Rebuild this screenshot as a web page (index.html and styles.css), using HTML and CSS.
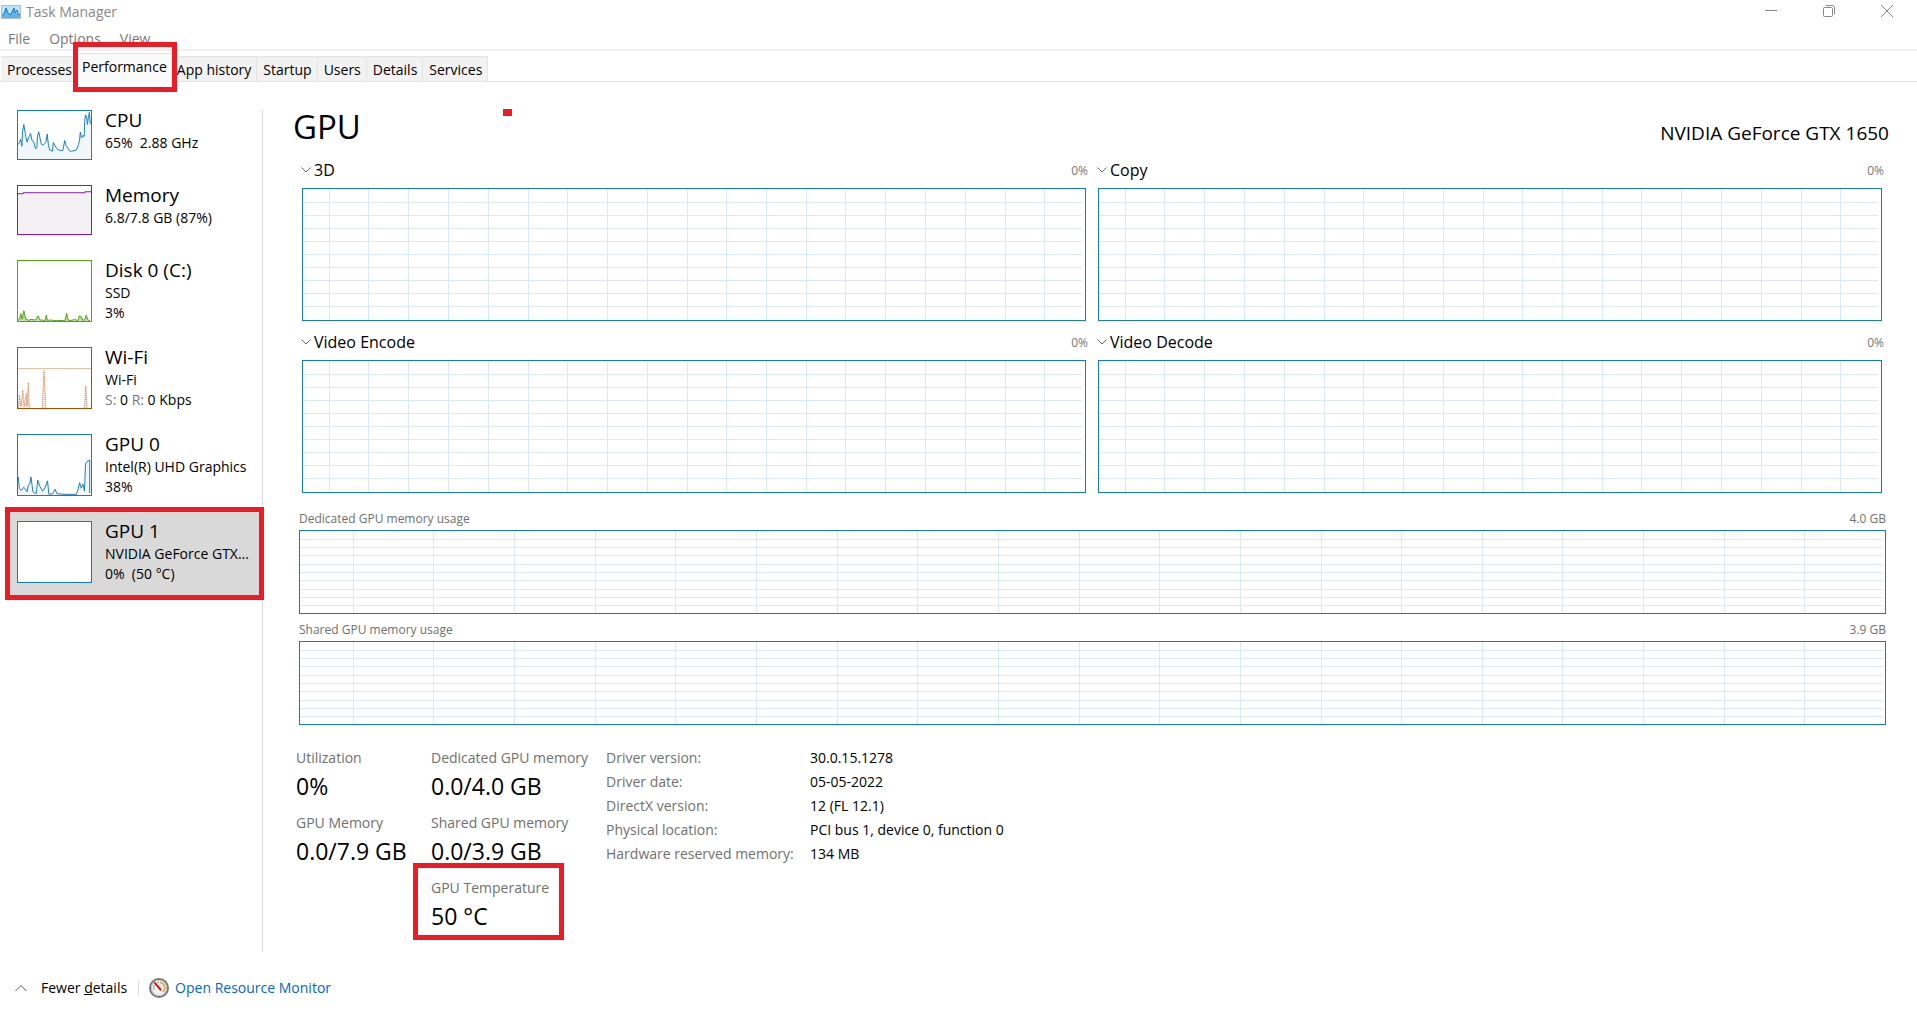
FILE: index.html
```html
<!DOCTYPE html>
<html lang="en">
<head>
    <meta charset="UTF-8">
    <meta name="viewport" content="width=device-width, initial-scale=1.0">
    <title>Task Manager</title>
    <link rel="stylesheet" href="styles.css">
</head>
<body>
    <!-- Shared drawings -->
    <svg class="defs" aria-hidden="true">
        <symbol id="grid-engine" viewBox="0 0 783 132" preserveAspectRatio="none">
            <path d="M0 13.5H780M0 26.5H780M0 39.5H780M0 52.5H780M0 65.5H780M0 79.5H780M0 92.5H780M0 105.5H780M0 118.5H780M26.5 0V132M65.5 0V132M105.5 0V132M145.5 0V132M185.5 0V132M225.5 0V132M264.5 0V132M304.5 0V132M344.5 0V132M384.5 0V132M424.5 0V132M464.5 0V132M504.5 0V132M543.5 0V132M583.5 0V132M623.5 0V132M663.5 0V132M703.5 0V132M742.5 0V132"/>
        </symbol>
        <symbol id="grid-memory" viewBox="0 0 1585 82" preserveAspectRatio="none">
            <path d="M0 8.5H1583M0 16.5H1583M0 24.5H1583M0 33.5H1583M0 41.5H1583M0 49.5H1583M0 58.5H1583M0 66.5H1583M0 74.5H1583M53.5 0V82M133.5 0V82M214.5 0V82M295.5 0V82M375.5 0V82M456.5 0V82M537.5 0V82M617.5 0V82M698.5 0V82M779.5 0V82M859.5 0V82M940.5 0V82M1021.5 0V82M1101.5 0V82M1182.5 0V82M1262.5 0V82M1343.5 0V82M1424.5 0V82M1504.5 0V82"/>
        </symbol>
        <symbol id="chevron" viewBox="0 0 10 6">
            <path d="M.5.5 5 5 9.5.5" fill="none" stroke="#666"/>
        </symbol>
    </svg>

    <header class="title-bar">
        <svg class="app-icon" viewBox="0 0 20 14" aria-hidden="true">
            <rect x=".5" y=".5" width="19" height="13" fill="#b9e2fb" stroke="#b5bcc2"/>
            <path d="M1 10 3 9 5 3 7 8 9 10 11 7 13 3 14 8 16 8 19 10V13H1z" fill="#5fb4ee"/>
            <path d="M1 10 3 9 5 3 7 8 9 10 11 7 13 3 14 8 16 5 17 9 19 10" fill="none" stroke="#1777b8"/>
        </svg>
        <span class="app-name">Task Manager</span>
        <div class="window-buttons">
            <button type="button" aria-label="Minimize">
                <svg width="12" height="12" viewBox="0 0 12 12"><path d="M0 5.5H12"/></svg>
            </button>
            <button type="button" aria-label="Restore">
                <svg width="12" height="12" viewBox="0 0 12 12"><rect x=".5" y="2.500" width="9" height="9" rx="1"/><path d="M3 .5H9.500Q11.500.5 11.500 2.500V9"/></svg>
            </button>
            <button type="button" aria-label="Close">
                <svg width="12" height="12" viewBox="0 0 12 12"><path d="M0 0 12 12M12 0 0 12"/></svg>
            </button>
        </div>
    </header>

    <nav class="menu-bar">
        <button type="button">File</button>
        <button type="button">Options</button>
        <button type="button">View</button>
    </nav>

    <div class="tabs" role="tablist">
        <button type="button" role="tab">Processes</button>
        <button type="button" role="tab" class="active marked" aria-selected="true">Performance</button>
        <button type="button" role="tab">App history</button>
        <button type="button" role="tab">Startup</button>
        <button type="button" role="tab">Users</button>
        <button type="button" role="tab">Details</button>
        <button type="button" role="tab">Services</button>
    </div>

    <div class="content">
        <aside class="sidebar">
            <button type="button" class="device">
                <svg class="thumb cpu" viewBox="0 0 225 150" preserveAspectRatio="none">
                    <path class="area" d="M0 150V105L5 98 8 88 12 110 14 65 18 42 24 80 28 97 33 82 39 70 43 92 48 95 54 118 58 115 60 78 64 65 68 85 72 104 78 106 86 98 90 72 94 108 98 122 104 124 106 126 109 98 114 108 120 118 126 122 138 124 141 108 144 92 148 108 154 116 158 124 164 126 180 122 187 104 190 88 192 66 196 84 200 76 204 80 206 30 208 12 212 20 214 42 217 20 220 4 223 40V150z"/>
                    <path d="M0 105 5 98 8 88 12 110 14 65 18 42 24 80 28 97 33 82 39 70 43 92 48 95 54 118 58 115 60 78 64 65 68 85 72 104 78 106 86 98 90 72 94 108 98 122 104 124 106 126 109 98 114 108 120 118 126 122 138 124 141 108 144 92 148 108 154 116 158 124 164 126 180 122 187 104 190 88 192 66 196 84 200 76 204 80 206 30 208 12 212 20 214 42 217 20 220 4 223 40"/>
                </svg>
                <span class="device-text">
                    <span class="device-name">CPU</span>
                    <span>65%&nbsp; 2.88 GHz</span>
                </span>
            </button>
            <button type="button" class="device">
                <svg class="thumb memory" viewBox="0 0 225 150" preserveAspectRatio="none">
                    <path class="area" d="M0 150V24H16V21H206V18H225V150z"/>
                    <path d="M0 24H16V21H206V18H225"/>
                </svg>
                <span class="device-text">
                    <span class="device-name">Memory</span>
                    <span>6.8/7.8 GB (87%)</span>
                </span>
            </button>
            <button type="button" class="device">
                <svg class="thumb disk tall" viewBox="0 0 225 186" preserveAspectRatio="none">
                    <path class="area" d="M0 185 5 178 9 163 12 180 15 170 18 154 24 180 34 184 40 180 54 184 62 170 68 184 84 184 87 168 91 185 145 184 150 162 155 184 174 182 184 185 189 170 195 172 200 184 206 182 210 168 217 185z"/>
                    <path d="M0 185 5 178 9 163 12 180 15 170 18 154 24 180 34 184 40 181 54 183 62 170 68 183 84 184 87 168 91 185 98 183 120 185 145 184 150 162 155 184 166 184 174 181 184 185 189 170 195 172 200 184 206 182 210 168 217 185H222"/>
                </svg>
                <span class="device-text">
                    <span class="device-name">Disk 0 (C:)</span>
                    <span>SSD</span>
                    <span>3%</span>
                </span>
            </button>
            <button type="button" class="device">
                <svg class="thumb wifi tall" viewBox="0 0 225 186" preserveAspectRatio="none">
                    <path class="limit" d="M0 64H225"/>
                    <path class="area" d="M0 185 4 145 9 180 15 131 19 180 26 140 28 180 32 107 35 185M75 185 80 70 86 185M205 185 209 118 213 185"/>
                    <path class="dotted" d="M2 185 4 145 9 180 15 131 19 180 26 140 28 180 32 107 35 185M75 185 80 70 86 185M205 185 209 118 213 185"/>
                </svg>
                <span class="device-text">
                    <span class="device-name">Wi-Fi</span>
                    <span>Wi-Fi</span>
                    <span><span class="muted">S:</span> 0 <span class="muted">R:</span> 0 Kbps</span>
                </span>
            </button>
            <button type="button" class="device">
                <svg class="thumb cpu tall" viewBox="0 0 225 186" preserveAspectRatio="none">
                    <path class="area" d="M0 130 4 165 10 172 18 162 26 174 32 155 40 130 46 176 56 182 61 140 68 160 76 174 91 142 95 183 106 183 114 168 120 182 180 183 190 148 195 165 200 152 205 174 208 90 213 82 221 78V186H0z"/>
                    <path d="M1 130 4 165 10 172 18 162 24 170 28 176 32 155 36 152 40 130 46 176 56 182 61 140 68 160 76 174 84 162 91 142 95 183 106 183 110 176 114 168 120 182 145 184 180 184 186 165 190 148 195 165 200 152 205 174 208 90 213 82 221 78V180"/>
                </svg>
                <span class="device-text">
                    <span class="device-name">GPU 0</span>
                    <span>Intel(R) UHD Graphics</span>
                    <span>38%</span>
                </span>
            </button>
            <button type="button" class="device selected marked">
                <svg class="thumb cpu tall" viewBox="0 0 225 186"></svg>
                <span class="device-text">
                    <span class="device-name">GPU 1</span>
                    <span>NVIDIA GeForce GTX...</span>
                    <span>0%&nbsp; (50 °C)</span>
                </span>
            </button>
        </aside>

        <main class="performance">
            <div class="heading">
                <h1>GPU</h1>
                <h2>NVIDIA GeForce GTX 1650</h2>
                <span class="red-dot"></span>
            </div>

            <div class="engines">
                <section>
                    <div class="engine-head">
                        <button type="button"><svg class="chevron"><use href="#chevron"/></svg>3D</button>
                        <span>0%</span>
                    </div>
                    <svg class="graph engine-graph"><use href="#grid-engine"/></svg>
                </section>
                <section>
                    <div class="engine-head">
                        <button type="button"><svg class="chevron"><use href="#chevron"/></svg>Copy</button>
                        <span>0%</span>
                    </div>
                    <svg class="graph engine-graph"><use href="#grid-engine"/></svg>
                </section>
                <section>
                    <div class="engine-head">
                        <button type="button"><svg class="chevron"><use href="#chevron"/></svg>Video Encode</button>
                        <span>0%</span>
                    </div>
                    <svg class="graph engine-graph"><use href="#grid-engine"/></svg>
                </section>
                <section>
                    <div class="engine-head">
                        <button type="button"><svg class="chevron"><use href="#chevron"/></svg>Video Decode</button>
                        <span>0%</span>
                    </div>
                    <svg class="graph engine-graph"><use href="#grid-engine"/></svg>
                </section>
            </div>

            <div class="memory-usage">
                <section>
                    <div class="memory-head"><span>Dedicated GPU memory usage</span><span>4.0 GB</span></div>
                    <svg class="graph memory-graph"><use href="#grid-memory"/></svg>
                </section>
                <section>
                    <div class="memory-head"><span>Shared GPU memory usage</span><span>3.9 GB</span></div>
                    <svg class="graph memory-graph"><use href="#grid-memory"/></svg>
                </section>
            </div>

            <div class="stats">
                <dl>
                    <div><dt>Utilization</dt><dd>0%</dd></div>
                    <div><dt>GPU Memory</dt><dd>0.0/7.9 GB</dd></div>
                </dl>
                <dl>
                    <div><dt>Dedicated GPU memory</dt><dd>0.0/4.0 GB</dd></div>
                    <div><dt>Shared GPU memory</dt><dd>0.0/3.9 GB</dd></div>
                    <div class="temperature marked"><dt>GPU Temperature</dt><dd>50 °C</dd></div>
                </dl>
                <table>
                    <tr><th scope="row">Driver version:</th><td>30.0.15.1278</td></tr>
                    <tr><th scope="row">Driver date:</th><td>05-05-2022</td></tr>
                    <tr><th scope="row">DirectX version:</th><td>12 (FL 12.1)</td></tr>
                    <tr><th scope="row">Physical location:</th><td>PCI bus 1, device 0, function 0</td></tr>
                    <tr><th scope="row">Hardware reserved memory:</th><td>134 MB</td></tr>
                </table>
            </div>
        </main>
    </div>

    <footer class="footer">
        <button type="button" class="fewer">
            <svg width="12" height="8" viewBox="0 0 12 8"><path d="M.5 7 6 1.500 11.500 7" fill="none" stroke="#555"/></svg>
            <span>Fewer <u>d</u>etails</span>
        </button>
        <a href="#" class="monitor-link">
            <svg width="20" height="20" viewBox="0 0 20 20">
                <circle cx="10" cy="10" r="9" fill="#f3f3f0" stroke="#777" stroke-width="2"/>
                <circle cx="10" cy="10" r="7.500" fill="none" stroke="#c9c9c9"/>
                <path d="M5 12A5.500 5.500 0 0 1 10 4.500" fill="none" stroke="#999"/>
                <path d="M11 4.500A5.500 5.500 0 0 1 14 14" fill="none" stroke="#e8a24a" stroke-width="1.500"/>
                <path d="M4.500 4.500 6 4 12.500 11 11.500 13z" fill="#d40000"/>
            </svg>
            Open Resource Monitor
        </a>
    </footer>
</body>
</html>
```
FILE: styles.css
```css
* {
    box-sizing: border-box;
}

body {
    font-family: "Segoe UI", "Open Sans", "Noto Sans", sans-serif;
    font-size: 14px;
    line-height: 20px;
    margin: 0;
    min-height: 100vh;
    display: flex;
    flex-direction: column;
    background-color: #fff;
    color: #000;
}

button {
    font: inherit;
    color: inherit;
    background: none;
    border: none;
    padding: 0;
    text-align: left;
    white-space: nowrap;
}

.defs {
    position: absolute;
    width: 0;
    height: 0;
}

/* Red highlight frames */
.marked {
    position: relative;
}

.marked::after {
    content: "";
    position: absolute;
    border: 5px solid #ed1c24;
    z-index: 1;
}

/* Title bar and menu */
.title-bar {
    display: flex;
    align-items: center;
    height: 24px;
    padding: 0 6px 0 1px;
    color: #888;
}

.app-icon {
    width: 20px;
    height: 14px;
    margin-right: 5px;
}

.window-buttons {
    display: flex;
    margin-left: auto;
    padding-bottom: 2px;
}

.window-buttons button {
    display: flex;
    justify-content: center;
    width: 48px;
    margin-left: 10px;
}

.window-buttons svg {
    fill: none;
    stroke: #888;
}

.menu-bar {
    display: flex;
    gap: 19px;
    height: 27px;
    padding: 5px 8px 0;
    border-bottom: 2px solid #f0f0f0;
    color: #777;
}

.menu-bar button {
    height: 20px;
}

/* Tabs */
.tabs {
    display: flex;
    align-items: flex-end;
    height: 31px;
    padding-left: 1px;
    border-bottom: 1px solid #e3e3e3;
}

.tabs button {
    height: 25px;
    padding: 2px 5px 0 6px;
    background-color: #f2f2f2;
    border: 1px solid #e5e5e5;
    border-width: 1px 1px 0 0;
}

.tabs .active {
    height: 29px;
    margin: 0 -2px -1px;
    padding-bottom: 4px;
    background-color: #f9f9f9;
}

.tabs .marked::after {
    inset: -12px -5px -10px -3px;
}

/* Page body */
.content {
    display: flex;
    flex: 1;
    padding-top: 28px;
}

.sidebar {
    flex: none;
    width: 263px;
    padding-left: 5px;
    border-right: 1px solid #d9d9d9;
}

.device {
    display: flex;
    align-items: flex-start;
    gap: 13px;
    width: 100%;
    padding: 12px 0 13px 12px;
}

.device:first-child {
    margin-top: -12px;
}

.device.selected {
    background-color: #d9d9d9;
}

.device.marked::after {
    inset: -2px -2px -4px 0;
}

.thumb {
    flex: none;
    width: 75px;
    height: 50px;
    background-color: #fff;
    border: 1px solid;
    fill: none;
    stroke: currentColor;
    stroke-width: 3px;
}

.thumb.tall {
    height: 62px;
}

.thumb.cpu {
    color: #117dbb;
}

.thumb.memory {
    color: #8b12ae;
}

.thumb.disk {
    color: #4da60c;
}

.thumb.wifi {
    color: #a74f01;
}

.thumb .area {
    stroke: none;
    fill: #f1f6fa;
}

.thumb.memory .area {
    fill: #f3f1f3;
}

.thumb.disk .area {
    fill: #b9dc9e;
}

.thumb.wifi .area {
    fill: #fbe3da;
}

.thumb .limit {
    stroke: #dfb98f;
}

.thumb .dotted {
    stroke: #d9722f;
    stroke-dasharray: 3 3;
}

.device-text {
    display: flex;
    flex-direction: column;
    margin: -3px 0;
}

.device-name {
    font-size: 19px;
    line-height: 26px;
}

.muted {
    color: #777;
}

.performance {
    flex: 1;
    min-width: 0;
    padding: 0 31px 0 36px;
}

.heading {
    position: relative;
    display: flex;
    justify-content: space-between;
    height: 48px;
    margin: 0 -3px 0 -6px;
}

h1 {
    margin: 0;
    font-size: 33px;
    font-weight: 400;
    line-height: 34px;
}

h2 {
    margin: 0;
    font-size: 19px;
    font-weight: 400;
    line-height: 46px;
}

.red-dot {
    position: absolute;
    left: 210px;
    top: -1px;
    width: 9px;
    height: 7px;
    background-color: #ed1c24;
}

/* Graphs */
.graph {
    display: block;
    width: 100%;
    border: 1px solid #117dbb;
    fill: none;
    stroke: #d9eaf4;
    stroke-width: 1px;
    shape-rendering: crispEdges;
}

.engines {
    display: grid;
    grid-template-columns: 1fr 1fr;
    gap: 9px 12px;
    padding: 0 4px 0 3px;
}

.engine-head {
    display: flex;
    justify-content: space-between;
    align-items: center;
    height: 24px;
    margin: 0 -2px 6px -1px;
}

.engine-head button {
    display: flex;
    align-items: center;
    gap: 3px;
    font-size: 16px;
}

.engine-head span {
    padding-top: 2px;
    font-size: 12px;
    color: #777;
}

.chevron {
    width: 10px;
    height: 6px;
}

.engine-graph {
    height: 133px;
}

.memory-usage {
    display: grid;
    gap: 6px;
    margin-top: 16px;
}

.memory-head {
    display: flex;
    justify-content: space-between;
    margin-bottom: 1px;
    font-size: 12px;
    color: #707070;
}

.memory-graph {
    height: 84px;
}

/* Figures under the graphs */
.stats {
    display: flex;
    align-items: flex-start;
    margin: 21px 0 0 -3px;
    line-height: 24px;
}

dl {
    display: grid;
    gap: 9px;
    width: 135px;
    margin: 0;
}

dl + dl {
    width: 175px;
}

dt,
th {
    color: #707070;
    white-space: nowrap;
}

dd {
    margin: 0;
    font-size: 23px;
    line-height: 32px;
    white-space: nowrap;
}

.temperature.marked::after {
    inset: -13px 42px -8px -18px;
}

table {
    border-collapse: collapse;
}

th {
    width: 204px;
    padding: 0;
    font-weight: 400;
    text-align: left;
}

td {
    padding: 0;
}

/* Footer */
.footer {
    display: flex;
    align-items: center;
    height: 65px;
    padding: 6px 15px 0;
}

.fewer {
    display: flex;
    align-items: center;
    gap: 14px;
}

.monitor-link {
    display: flex;
    align-items: center;
    gap: 6px;
    margin-left: 11px;
    color: #0066cc;
    text-decoration: none;
}

.monitor-link::before {
    content: "";
    height: 14px;
    margin-right: 4px;
    border-left: 1px solid #d9d9d9;
}
```
